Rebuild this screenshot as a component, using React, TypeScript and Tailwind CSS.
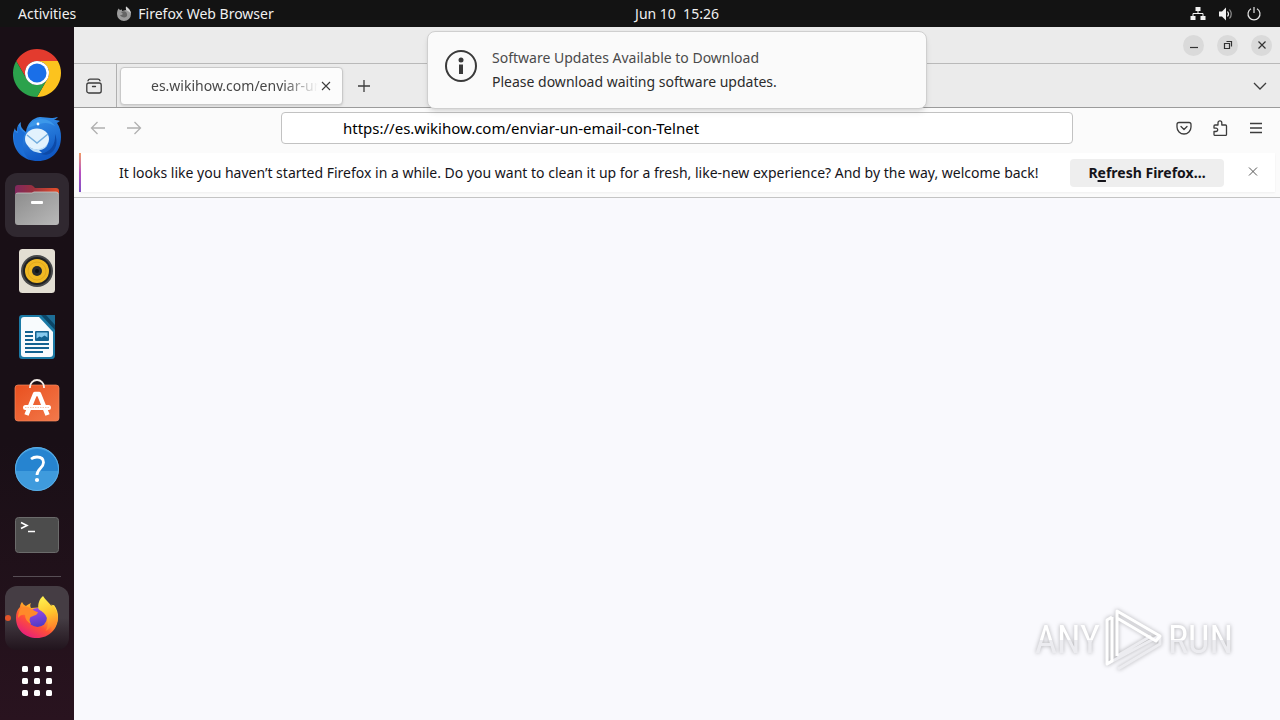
import { useState, type ReactNode } from 'react';

const PAGE_URL = 'https://es.wikihow.com/enviar-un-email-con-Telnet';

function ChromeIcon() {
  return (
    <svg viewBox="0 0 48 48" className="size-12">
      <path fill="#e33b2e" d="M24 12h20.78A24 24 0 0 0 3.22 12l10.39 18A12 12 0 0 1 24 12z" />
      <path fill="#fcc31e" d="M34.39 30 24 48a24 24 0 0 0 20.78-36H24a12 12 0 0 1 10.39 18z" />
      <path fill="#2ba24c" d="M13.61 30 3.22 12A24 24 0 0 0 24 48l10.39-18a12 12 0 0 1-20.78 0z" />
      <circle cx="24" cy="24" r="12" fill="#fff" />
      <circle cx="24" cy="24" r="9.5" fill="#1a6fe8" />
    </svg>
  );
}

function ThunderbirdIcon() {
  return (
    <svg viewBox="0 0 48 48" className="size-12">
      <defs>
        <linearGradient id="tb" x1="0" y1="0" x2="0.4" y2="1">
          <stop offset="0" stopColor="#3b9af0" />
          <stop offset="1" stopColor="#1059c4" />
        </linearGradient>
      </defs>
      <path fill="url(#tb)" d="M0 21c0-3 1-6 2-8 0 2 1 3 2 3 0-4 1-7 4-9-1 4 1 7 5 10 1-8 6-14 14-15 4 0 8 1 11 1 2 0 5-.500 7-1-1 1-2 2-4 3 2 0 4 0 6 1-1 1-2 1-3 2 3 4 4 9 4 14 0 14-9 24-23 24C10 46 0 36 0 21z" />
      <path fill="#1b6ed6" d="M1 18c-1 12 5 21 15 27C9 37 8 27 12 18c-4-2-6-5-6-8-2 2-2 5-1 8-2 0-3-1-3-3z" />
      <path fill="#3c98ea" d="M15 13c3-7 8-9 13-9 7 0 11 3 14 7-5-3-10-4-15-2-4 1-8 2-12 4z" />
      <path fill="#0d4aa8" d="M28 39c9-2 15-9 14-20 5 12-3 24-14 20z" />
      <ellipse cx="24" cy="24" rx="12" ry="10.500" fill="#e2f2fd" />
      <path fill="#c0e0f8" d="M15 31c6 5 14 4 20-2-2 4-5 6-9 6l3 3c-6 0-11-2-14-7z" />
      <path fill="none" stroke="#74aede" strokeWidth="1.500" d="m14 20 10 8 11-9" />
      <circle cx="25" cy="9" r="1.400" fill="#fff" />
    </svg>
  );
}

function FilesIcon() {
  return (
    <svg viewBox="0 0 48 48" className="size-12">
      <defs>
        <linearGradient id="folder-back" x1="0" y1="0" x2="1" y2="0">
          <stop offset="0" stopColor="#80285e" />
          <stop offset="0.4" stopColor="#98303f" />
          <stop offset="1" stopColor="#e5502a" />
        </linearGradient>
        <linearGradient id="folder-front" x1="0" y1="0" x2="1" y2="1">
          <stop offset="0" stopColor="#8c8c8c" />
          <stop offset="1" stopColor="#b9b9b9" />
        </linearGradient>
      </defs>
      <path fill="url(#folder-back)" d="M2 7q0-3 3-3h12q2 0 3 1l2 2h21q3 0 3 3v12H2z" />
      <path fill="url(#folder-front)" d="M2 14q0-2 3-2h14l2-1h22q3 0 3 3v27q0 3-3 3H5q-3 0-3-3z" />
      <path fill="none" stroke="#c7c7c7" strokeWidth=".8" d="M3 13q0-1 2-1h14l2-1h22q2 0 2 2" />
      <rect x="18" y="20" width="12" height="3" rx="1" fill="#fff" />
    </svg>
  );
}

function RhythmboxIcon() {
  return (
    <svg viewBox="0 0 48 48" className="size-12">
      <rect x="6" y="2" width="36" height="44" rx="3.500" fill="#e3ded3" />
      <circle cx="24" cy="24" r="16" fill="#47484a" />
      <circle cx="24" cy="24" r="14" fill="#202123" />
      <circle cx="24" cy="24" r="12" fill="#f0b823" />
      <circle cx="24" cy="24" r="9" fill="none" stroke="#d9a11a" strokeWidth=".7" />
      <circle cx="24" cy="24" r="5" fill="#25292d" />
      <circle cx="24" cy="24" r="2" fill="#0e1114" />
    </svg>
  );
}

function WriterIcon() {
  return (
    <svg viewBox="0 0 48 48" className="size-12">
      <path fill="#1c7aa5" d="M6 5q0-3 3-3h33v40q0 4-3 4H9q-3 0-3-3z" />
      <path fill="#0c4667" d="M28 2h14v15z" />
      <path fill="#1d6d96" d="M33 2h9v10z" />
      <path fill="#f8fbfd" d="M8 7q0-3 3-3h15l14 15v22q0 3-3 3H11q-3 0-3-3z" />
      <path stroke="#136391" strokeWidth="2" d="M12 19h8M12 23h8M12 27h8M12 31h24M12 35h24M12 39h18" />
      <rect x="22" y="18" width="14" height="10" rx="1" fill="#136391" />
      <path fill="#86caee" d="M23.500 19.500h11v5l-3-2-3 2-2-1-3 2z" />
    </svg>
  );
}

function SoftwareIcon() {
  return (
    <svg viewBox="0 0 48 48" className="size-12">
      <defs>
        <linearGradient id="bag" x1="0" y1="0" x2="1" y2="1">
          <stop offset="0" stopColor="#e9501f" />
          <stop offset="1" stopColor="#f2794b" />
        </linearGradient>
      </defs>
      <rect x="2" y="6" width="44" height="36" rx="3" fill="url(#bag)" stroke="#f38a60" strokeWidth=".7" />
      <path fill="none" stroke="#f4ece7" strokeWidth="1.800" d="M17 9V8a7 7 0 0 1 14 0v1" />
      <path fill="none" stroke="#fff" strokeWidth="4.500" strokeLinejoin="round" d="m13.500 36 8.500-21h4l8.500 21" />
      <rect x="10" y="26" width="28" height="5" rx="2.500" fill="#fff" />
      <path stroke="#f2a98c" strokeWidth=".7" strokeDasharray="1.500 1" d="M12 28.500h24" />
    </svg>
  );
}

function HelpIcon() {
  return (
    <svg viewBox="0 0 48 48" className="size-12">
      <circle cx="24" cy="24" r="22" fill="#3f9bdd" />
      <path fill="#2684d0" d="M2 26a22 22 0 0 1 44 0z" />
      <circle cx="24" cy="24" r="21.500" fill="none" stroke="#5aaee6" />
      <path fill="none" stroke="#fff" strokeWidth="2.800" d="M18 14c2-1.500 4-2 6-2 4 0 6.500 2 6.500 5.500 0 5.500-6.500 6-6.500 12.500" />
      <circle cx="24" cy="35" r="2.100" fill="#fff" />
    </svg>
  );
}

function TerminalIcon() {
  return (
    <svg viewBox="0 0 48 48" className="size-12">
      <rect x="2.500" y="6.500" width="43" height="35" rx="3" fill="#4c4c4c" stroke="#6b6b6b" />
      <path fill="none" stroke="#fff" strokeWidth="1.600" d="m8 11.500 6 3L8 17.500M15 20.500h7" />
    </svg>
  );
}

function FirefoxIcon() {
  return (
    <svg viewBox="0 0 48 48" className="size-12">
      <defs>
        <linearGradient id="ff-body" x1="0.85" y1="0.1" x2="0.25" y2="0.95">
          <stop offset="0" stopColor="#ffe14a" />
          <stop offset="0.35" stopColor="#ffa528" />
          <stop offset="0.62" stopColor="#ff5136" />
          <stop offset="1" stopColor="#e8207a" />
        </linearGradient>
        <linearGradient id="ff-globe" x1="0.3" y1="0" x2="0.5" y2="1">
          <stop offset="0" stopColor="#a049e8" />
          <stop offset="1" stopColor="#4f3bc4" />
        </linearGradient>
        <linearGradient id="ff-flame" x1="0.4" y1="0" x2="0.6" y2="1">
          <stop offset="0" stopColor="#fff04f" />
          <stop offset="0.5" stopColor="#ffc32c" />
          <stop offset="1" stopColor="#ff7a2b" />
        </linearGradient>
      </defs>
      <path fill="url(#ff-body)" d="M9 8c1 2 2 3 4 4 1-1 3-2 5-3-1 2-1 3 0 5l13-1 10-2c3 4 4 8 4 12 0 12-9 21-21 21S3 36 3 24c0-5 1-8 4-11 0-2 1-4 2-5z" />
      <circle cx="24.500" cy="23.500" r="9.500" fill="url(#ff-globe)" />
      <path fill="#ff8a2a" d="M8 14c3-2 6-2 9 0 3 2 6 4 8 4l-1 2c-2 2-6 2-7 4-1 2 0 4 1 6-4-2-6-5-6-9-2-1-5 0-7 3 0-4 1-7 3-10z" />
      <path fill="url(#ff-flame)" d="M30 2c2 4 7 7 9 11 0-1 0-2-.500-3 5 5 7 11 6 17-1 4-3 7-6 10 1-5 0-6-2-3-1 1-2 2-4 3 3-4 3-10 1-14-2-5-6-6-8-8-1-5 1-10 4.500-13z" />
    </svg>
  );
}

const dockApps: { name: string; icon: ReactNode; focused?: boolean }[] = [
  { name: 'Google Chrome', icon: <ChromeIcon /> },
  { name: 'Thunderbird', icon: <ThunderbirdIcon /> },
  { name: 'Files', icon: <FilesIcon />, focused: true },
  { name: 'Rhythmbox', icon: <RhythmboxIcon /> },
  { name: 'LibreOffice Writer', icon: <WriterIcon /> },
  { name: 'Software', icon: <SoftwareIcon /> },
  { name: 'Help', icon: <HelpIcon /> },
  { name: 'Terminal', icon: <TerminalIcon /> },
];

function TopBar() {
  return (
    <header className="grid h-[27px] grid-cols-[1fr_auto_1fr] items-center bg-[#131313] text-sm text-[#f0f0f0]">
      <div className="flex items-center">
        <button className="ml-[18px]">Activities</button>
        <button className="ml-10 flex items-center gap-1.5">
          <svg viewBox="0 0 16 16" className="size-4">
            <path fill="#9b9b9b" d="M2.500 2.500 4 4l2-.5V5l4-1L10 .5c2 1.500 5 3.500 5 7.500a7 7 0 1 1-14 0c0-2 .5-4 1.500-5.500z" />
            <path fill="#666" d="M5 6c2-1 4-1 5 0s2 4 0 5-5 0-6-2c1 0 2 0 3-1z" />
            <path fill="#d4d4d4" d="M10 .5c2 1.500 4.500 3.500 5 7-1-1-2-2-4-3-1-1-1.500-2-1-4z" />
          </svg>
          Firefox Web Browser
        </button>
      </div>
      {/* the clock is centred over the window area, right of the dock */}
      <button className="ml-[74px] whitespace-pre">Jun 10  15:26</button>
      <button aria-label="System menu" className="mr-[18px] flex items-center gap-3 justify-self-end">
        <svg viewBox="0 0 16 16" className="size-4" fill="#f2f2f2">
          <path d="M5.500 1h5v4h-5zM.5 10h5v4h-5zM10.500 10h5v4h-5z" />
          <path fill="none" stroke="#f2f2f2" d="M8 5v3M3 10V7.500h10V10" />
        </svg>
        <svg viewBox="0 0 16 16" className="size-4" fill="#f2f2f2">
          <path d="M1 5.500h3L8 1.500v13l-4-4H1z" />
          <path fill="none" stroke="#f2f2f2" strokeWidth="1.200" d="M9.500 5.500q2 2.500 0 5" />
          <path fill="none" stroke="#909090" strokeWidth="1.200" d="M11.500 3.500q3.500 4.500 0 9" />
        </svg>
        <svg viewBox="0 0 16 16" className="size-4" fill="none" stroke="#e6e6e6" strokeWidth="1.200">
          <path d="M5 2.700a6 6 0 1 0 6 0M8 1v6" />
        </svg>
      </button>
    </header>
  );
}

function Dock() {
  return (
    <nav
      aria-label="Dock"
      className="flex w-[74px] shrink-0 flex-col items-center gap-0.5 bg-linear-to-b from-[#190f16] from-60% to-[#29131f] pt-3.5"
    >
      {dockApps.map((app) => (
        <button
          key={app.name}
          aria-label={app.name}
          className={`flex size-16 shrink-0 items-center justify-center rounded-xl ${app.focused ? 'bg-[#302830]' : ''}`}
        >
          {app.icon}
        </button>
      ))}
      <div className="my-[7px] h-px w-12 shrink-0 bg-[#574e55]" />
      <button
        aria-label="Firefox"
        className="relative flex size-16 shrink-0 items-center justify-center rounded-xl bg-linear-to-b from-[#453d44] from-50% to-[#21141d]"
      >
        <span className="absolute top-1/2 left-0 size-1.5 -translate-y-1/2 rounded-full bg-[#e2542a]" />
        <FirefoxIcon />
      </button>
      <button aria-label="Show Applications" className="flex h-[58px] w-16 shrink-0 items-center justify-center">
        <svg viewBox="0 0 30 30" className="size-[30px]" fill="#fff">
          {[0, 12, 24].map((y) =>
            [0, 12, 24].map((x) => <rect key={`${x}-${y}`} x={x} y={y} width="6" height="6" rx="1.500" />),
          )}
        </svg>
      </button>
    </nav>
  );
}

function TitleBar() {
  const controls = [
    { label: 'Minimize', d: 'M4 10.500h8' },
    { label: 'Restore', d: 'M4.500 6.500h5v5h-5zM6.500 4.500h5v5' },
    { label: 'Close', d: 'm4.500 4.500 7 7m0-7-7 7' },
  ];
  return (
    <div className="flex h-[37px] items-center justify-end gap-[13px] border-b border-[#b9b9b9] bg-[#ebebeb] pr-2">
      {controls.map((control) => (
        <button
          key={control.label}
          aria-label={control.label}
          className="flex size-[21px] items-center justify-center rounded-full bg-[#dadada]"
        >
          <svg viewBox="0 0 16 16" className="size-4" fill="none" stroke="#333" strokeWidth="1.200">
            <path d={control.d} />
          </svg>
        </button>
      ))}
    </div>
  );
}

function TabStrip() {
  return (
    <div className="flex h-11 items-center border-b border-[#9b9b9b] bg-[#ebebeb]">
      <button
        aria-label="Firefox View"
        className="flex w-[43px] items-center self-stretch border-r border-[#b0b0b0] pl-3"
      >
        <svg viewBox="0 0 16 16" className="size-4" fill="none" stroke="#3c3c3c" strokeWidth="1.300" strokeLinecap="round">
          <rect x=".8" y="5" width="14.400" height="10" rx="2" />
          <path d="M2 2.800Q2.500 1.200 4 1.200h8q1.500 0 2 1.600M6.500 8.500h3" />
        </svg>
      </button>
      <div className="ml-[3px] flex h-[38px] w-[223px] items-center rounded border border-[#c9c9c9] bg-[#fcfcfc] pr-2 pl-[30px] text-[#484848] shadow-sm">
        <span className="flex-1 overflow-hidden text-sm whitespace-nowrap [mask-image:linear-gradient(to_left,transparent,black_36px)]">
          es.wikihow.com/enviar-un-email-con-Telnet
        </span>
        <button aria-label="Close tab" className="flex size-4 items-center justify-center">
          <svg viewBox="0 0 16 16" className="size-4" fill="none" stroke="#3c3c3c" strokeWidth="1.100">
            <path d="m4 4 8 8m0-8-8 8" />
          </svg>
        </button>
      </div>
      <button aria-label="New tab" className="ml-3 flex size-[18px] items-center justify-center">
        <svg viewBox="0 0 16 16" className="size-4" fill="none" stroke="#3c3c3c" strokeWidth="1.300">
          <path d="M8 2v12M2 8h12" />
        </svg>
      </button>
      <button aria-label="List all tabs" className="mr-3 ml-auto">
        <svg viewBox="0 0 16 16" className="size-4" fill="none" stroke="#3c3c3c" strokeWidth="1.300">
          <path d="m2 5 6 6 6-6" />
        </svg>
      </button>
    </div>
  );
}

function NavBar() {
  const [url, setUrl] = useState(PAGE_URL);
  return (
    <div className="flex h-10 items-center">
      <div className="flex w-[207px] shrink-0 gap-5 pl-4">
        <button aria-label="Back">
          <svg viewBox="0 0 16 16" className="size-4" fill="none" stroke="#b0b0b0" strokeWidth="1.300">
            <path d="M15 8H1.500M7.500 2l-6 6 6 6" />
          </svg>
        </button>
        <button aria-label="Forward">
          <svg viewBox="0 0 16 16" className="size-4" fill="none" stroke="#b0b0b0" strokeWidth="1.300">
            <path d="M1 8h13.500M8.500 2l6 6-6 6" />
          </svg>
        </button>
      </div>
      <input
        type="text"
        aria-label="Address"
        value={url}
        onChange={(e) => setUrl(e.target.value)}
        className="h-8 min-w-0 flex-1 rounded border border-[#c2c2c2] bg-white pl-[61px] text-[15px] text-black"
      />
      <div className="flex w-[207px] shrink-0 justify-end gap-5 pr-4">
        <button aria-label="Save to Pocket">
          <svg viewBox="0 0 16 16" className="size-4" fill="none" stroke="#3c3c3c" strokeWidth="1.300" strokeLinecap="round" strokeLinejoin="round">
            <path d="M3 2.500h10q2 0 2 2V7A7 7 0 0 1 1 7V4.500q0-2 2-2z" />
            <path d="m5 6.500 3 3 3-3" />
          </svg>
        </button>
        <button aria-label="Extensions">
          <svg viewBox="0 0 16 16" className="size-4" fill="none" stroke="#3c3c3c" strokeWidth="1.300" strokeLinejoin="round">
            <path d="M3 15.400q-1 0-1-1V11.500h2a1.700 1.700 0 1 0 0-3.400H2V6q0-1 1-1h3V2.700a1.900 1.900 0 1 1 3.800 0V5h3.700q1 0 1 1v8.400q0 1-1 1z" />
          </svg>
        </button>
        <button aria-label="Open application menu">
          <svg viewBox="0 0 16 16" className="size-4" fill="none" stroke="#3c3c3c" strokeWidth="1.300">
            <path d="M2 3.500h12M2 8h12M2 12.500h12" />
          </svg>
        </button>
      </div>
    </div>
  );
}

function InfoBar() {
  return (
    <div className="mx-[5px] mt-[5px] mb-[5px] flex min-h-[39px] items-center bg-white pr-3.5 shadow-xs">
      <div className="w-0.5 self-stretch bg-linear-to-b from-[#f29a62] via-[#b84fc0] to-[#7f50c4]" />
      <p className="ml-[38px] flex-1 text-sm text-[#15141a]">
        It looks like you haven’t started Firefox in a while. Do you want to clean it up for a fresh, like-new
        experience? And by the way, welcome back!
      </p>
      <button className="h-7 w-[154px] shrink-0 rounded bg-[#eeeeee] text-sm font-bold whitespace-nowrap text-[#15141a]">
        R<span className="underline decoration-2 underline-offset-2">e</span>fresh Firefox…
      </button>
      <button aria-label="Close" className="ml-[21px]">
        <svg viewBox="0 0 16 16" className="size-4" fill="none" stroke="#555" strokeWidth="1">
          <path d="m4 2.500 8 8m0-8-8 8" />
        </svg>
      </button>
    </div>
  );
}

function UpdateNotification() {
  return (
    <div
      role="status"
      className="absolute inset-x-0 top-1 mx-auto flex w-[500px] gap-[15px] rounded-lg border border-[#cfcfcf] bg-[#fafafa] px-[17px] pt-3.5 pb-3.5 shadow-md"
    >
      <svg viewBox="0 0 32 32" className="mt-1 size-8 shrink-0">
        <circle cx="16" cy="16" r="15" fill="none" stroke="#3a3a3a" strokeWidth="2" />
        <circle cx="16" cy="10" r="2.500" fill="#3a3a3a" />
        <path fill="#3a3a3a" d="M14 14.500h4V24h-4z" />
      </svg>
      <div className="text-sm leading-6">
        <p className="text-[#4a4a4a]">Software Updates Available to Download</p>
        <p className="text-[#2c2c2c]">Please download waiting software updates.</p>
      </div>
    </div>
  );
}

function Watermark() {
  return (
    <div className="pointer-events-none absolute right-[47px] bottom-12 flex items-center gap-1 font-['Roboto_Condensed','Liberation_Sans',sans-serif] text-[38px] leading-none text-white drop-shadow-[0_0_2px_rgba(0,0,0,0.3)]">
      <span className="bg-linear-to-b from-white from-50% to-[#ececf0] to-50% bg-clip-text text-transparent">ANY</span>
      <svg viewBox="0 0 60 64" className="h-16 w-[60px]" fill="none" strokeWidth="3" strokeLinejoin="round">
        <path stroke="#ececf0" d="M3 56 55 28M14 61l42-25v-8M13 48l34-20" />
        <path stroke="#fff" d="M8 9 3 12v44l5-3V9M13 48V3l43 25-4 5-39-23" />
      </svg>
      <span className="bg-linear-to-b from-white from-50% to-[#ececf0] to-50% bg-clip-text text-transparent">RUN</span>
    </div>
  );
}

export default function App() {
  return (
    <div className="flex min-h-screen flex-col font-['Noto_Sans',sans-serif]">
      <TopBar />
      <div className="flex flex-1">
        <Dock />
        <main className="relative flex min-w-0 flex-1 flex-col bg-[#f9f9fd]">
          <TitleBar />
          <TabStrip />
          <div className="border-b border-[#c4c4c4] bg-[#fbfbfb]">
            <NavBar />
            <InfoBar />
          </div>
          <UpdateNotification />
          <Watermark />
        </main>
      </div>
    </div>
  );
}
